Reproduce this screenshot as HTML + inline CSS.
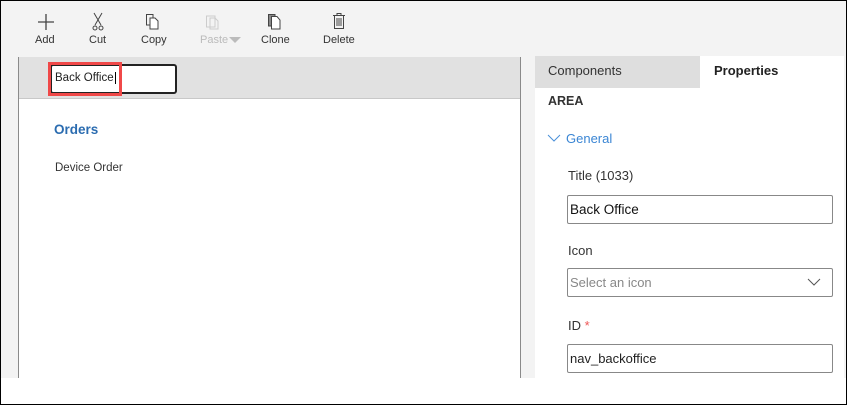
<!DOCTYPE html>
<html><head><style>
*{margin:0;padding:0;box-sizing:border-box}
body{width:847px;height:405px;background:#fff;font-family:"Liberation Sans",sans-serif;position:relative;overflow:hidden}
.frame{position:absolute;left:0;top:0;width:847px;height:405px;border:1px solid #000}
.bg{position:absolute;left:1px;top:1px;width:845px;height:377px;background:#f3f3f3}
.tb{position:absolute;top:34px;font-size:11px;color:#333;text-align:center}
.ic{position:absolute}
.left{position:absolute;left:18px;top:57px;width:503px;height:321px;background:#fff;border-left:1px solid #8a8a8a;border-right:1px solid #8a8a8a}
.lh{position:absolute;left:0;top:0;width:501px;height:42px;background:#e1e1e1;border-bottom:1px solid #c8c8c8}
.right{position:absolute;left:535px;top:56px;width:309px;height:322px;background:#fff}
.t{position:absolute;font-size:13px;color:#333}
.inp{position:absolute;left:567px;width:266px;height:29px;border:1px solid #888;border-radius:2px;font-size:13px;padding:6px 2px;color:#222}
</style></head><body>
<div class="frame"></div>
<div class="bg"></div>
<svg class="ic" style="left:37px;top:13px" width="18" height="18"><path d="M9 1V17M1 9H17" stroke="#444" stroke-width="1.3"/></svg>
<div class="tb" style="left:35px">Add</div>
<svg class="ic" style="left:92px;top:12px" width="12" height="20"><path d="M2 1L9 13M10 1L3 13" stroke="#444" fill="none"/><circle cx="3" cy="16" r="2" stroke="#444" fill="none"/><circle cx="9" cy="16" r="2" stroke="#444" fill="none"/></svg>
<div class="tb" style="left:89px">Cut</div>
<svg class="ic" style="left:145px;top:13px" width="16" height="18"><path d="M1.5 1.5H8V12H1.5Z" stroke="#444" fill="none"/><path d="M5 5H10L13 8V16H5Z" stroke="#444" fill="#fff"/></svg>
<div class="tb" style="left:141px">Copy</div>
<svg class="ic" style="left:205px;top:13px" width="16" height="18"><path d="M1.5 3H10V14H1.5Z M5 5H10L13 8V16H5Z" stroke="#ccc" fill="none"/></svg>
<div class="tb" style="left:200px;color:#bbb">Paste</div>
<svg class="ic" style="left:229px;top:37px" width="12" height="8"><path d="M0 0H12L6 6Z" fill="#bbb"/></svg>
<svg class="ic" style="left:267px;top:13px" width="16" height="18"><path d="M1.5 1.5H8V13H1.5Z" stroke="#444" fill="#888"/><path d="M4.5 3.5H10L13 7V16H4.5Z" stroke="#444" fill="#fff"/></svg>
<div class="tb" style="left:261px">Clone</div>
<svg class="ic" style="left:332px;top:12px" width="14" height="18"><path d="M1 3.5H13M5 3.5V1.5H9V3.5M2.5 3.5V16.5H11.5V3.5M5 6V14M7 6V14M9 6V14" stroke="#444" fill="none"/></svg>
<div class="tb" style="left:323px">Delete</div>
<div class="left"><div class="lh"></div></div>
<div style="position:absolute;left:50px;top:64px;width:127px;height:30px;background:#fff;border:2px solid #222;border-radius:3px"></div>
<div style="position:absolute;left:48px;top:62px;width:74px;height:34px;border:3px solid #f04848"></div>
<div class="t" style="left:55px;top:72px;font-size:11.5px;color:#222">Back Office<span style="border-left:1px solid #000;margin-left:1px"></span></div>
<div class="t" style="left:54px;top:122px;color:#2b6cb0;font-weight:bold;font-size:13.5px">Orders</div>
<div class="t" style="left:55px;top:162px;font-size:11.5px">Device Order</div>
<div class="right"></div>
<div style="position:absolute;left:535px;top:56px;width:165px;height:32px;background:#dedede"></div>
<div class="t" style="left:548px;top:63px">Components</div>
<div class="t" style="left:714px;top:63px;color:#222;font-weight:bold">Properties</div>
<div class="t" style="left:548px;top:94px;font-weight:bold;font-size:12.5px">AREA</div>
<svg class="ic" style="left:547px;top:133px" width="14" height="10"><path d="M1 2L7 8L13 2" stroke="#4a90d9" fill="none"/></svg>
<div class="t" style="left:566px;top:131px;color:#3b86d4">General</div>
<div class="t" style="left:568px;top:168px">Title (1033)</div>
<div class="inp" style="top:195px;font-size:13.5px;color:#111">Back Office</div>
<div class="t" style="left:568px;top:243px">Icon</div>
<div class="inp" style="top:268px;color:#888">Select an icon</div>
<svg class="ic" style="left:807px;top:278px" width="14" height="9"><path d="M1 1L7 7L13 1" stroke="#555" fill="none"/></svg>
<div class="t" style="left:568px;top:318px">ID <span style="color:#e55">*</span></div>
<div class="inp" style="top:344px">nav_backoffice</div>
</body></html>
